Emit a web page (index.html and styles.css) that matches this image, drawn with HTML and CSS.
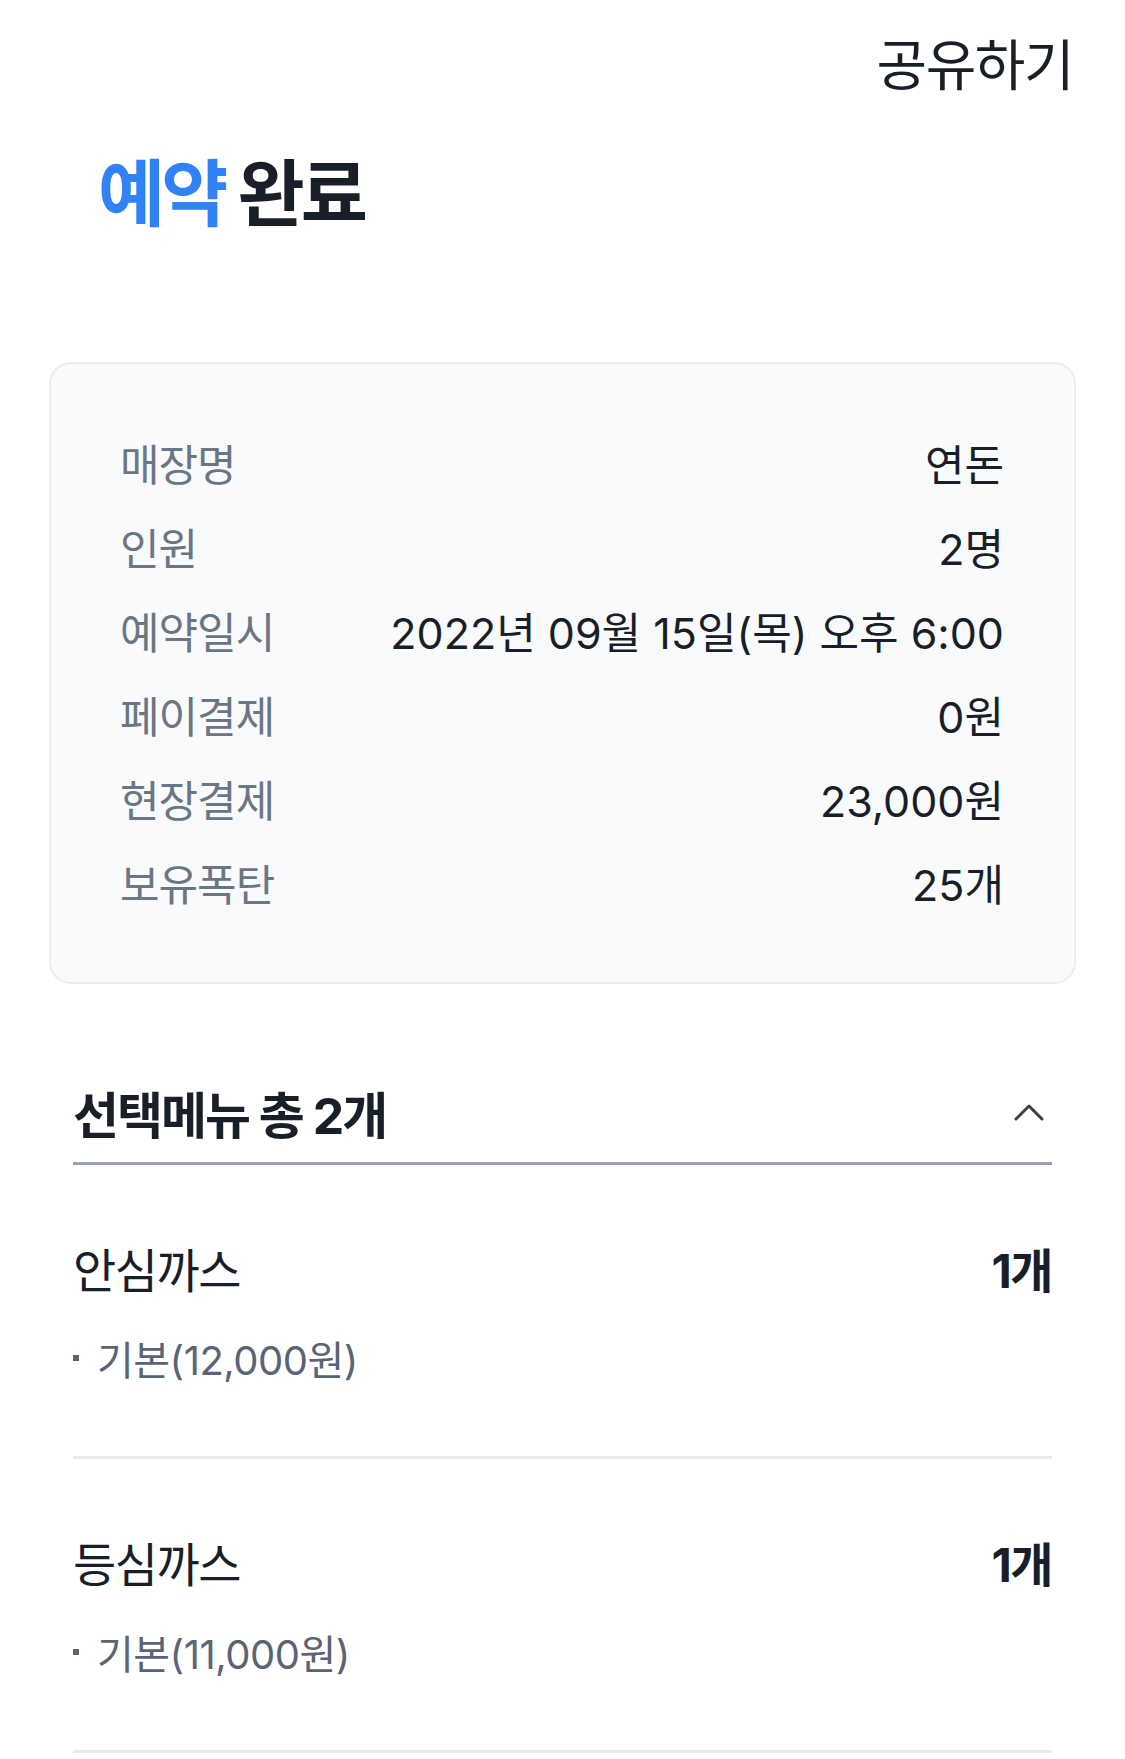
FILE: index.html
```html
<!DOCTYPE html>
<html lang="ko">
<head>
  <meta charset="UTF-8" />
  <title>예약 완료</title>
  <link rel="stylesheet" href="styles.css">
</head>
<body>
  <div class="topbar">
    <button class="share">공유하기</button>
  </div>

  <h1 class="title"><span class="accent">예약</span> 완료</h1>

  <div class="summary">
    <div class="row"><span class="label">매장명</span><span class="value">연돈</span></div>
    <div class="row"><span class="label">인원</span><span class="value">2명</span></div>
    <div class="row"><span class="label">예약일시</span><span class="value">2022년 09월 15일(목) 오후 6:00</span></div>
    <div class="row"><span class="label">페이결제</span><span class="value">0원</span></div>
    <div class="row"><span class="label">현장결제</span><span class="value">23,000원</span></div>
    <div class="row"><span class="label">보유폭탄</span><span class="value">25개</span></div>
  </div>

  <div class="menu">
    <div class="menu-head">
      <h3>선택메뉴 총 2개</h3>
      <svg class="chevron" width="30" height="18" viewBox="0 0 30 18">
        <path d="M2 16 L15 3 L28 16" fill="none" stroke="#3b4047" stroke-width="3" stroke-linecap="round" stroke-linejoin="round"/>
      </svg>
    </div>
    <div id="menuList"></div>
  </div>

  <script>
    const items = [
      { name: "안심까스", qty: 1, option: "기본(12,000원)" },
      { name: "등심까스", qty: 1, option: "기본(11,000원)" },
    ];

    const list = document.getElementById("menuList");
    items.forEach(item => {
      list.innerHTML += `<div class="item">
        <div class="item-top">
          <span class="item-name">${item.name}</span>
          <span class="item-qty">${item.qty}개</span>
        </div>
        <div class="item-option">${item.option}</div>
      </div>`;
    });
  </script>
</body>
</html>
```

FILE: styles.css
```css
body {
  margin: 0;
  font-family: Inter, "Noto Sans CJK KR", sans-serif;
  background-color: #fff;
  color: #191f28;
}

.topbar {
  display: flex;
  justify-content: flex-end;
  align-items: center;
  height: 122px;
  padding: 0 52px;
}

.share {
  border: none;
  background: none;
  padding: 0;
  font-family: inherit;
  font-size: 55px;
  font-weight: 400;
  letter-spacing: -1.5px;
  color: #191f28;
}

.title {
  margin: 0 0 96px;
  padding-left: 98px;
  font-size: 73px;
  line-height: 144px;
  font-weight: 700;
  letter-spacing: -4px;
  color: #191f28;
}

.title .accent {
  color: #3182f6;
}

.summary {
  margin: 0 49px;
  padding: 56px 70px 58px 69px;
  background-color: #f9fafb;
  border: 2px solid #eaecef;
  border-radius: 22px;
}

.row {
  display: flex;
  justify-content: space-between;
  align-items: center;
  height: 84px;
  font-size: 43px;
  letter-spacing: -1px;
}

.row .label {
  color: #6b7684;
}

.row .value {
  color: #191f28;
  letter-spacing: 0;
}

.menu {
  margin: 78px 73px 0;
}

.menu-head {
  display: flex;
  justify-content: space-between;
  align-items: center;
  height: 100px;
  border-bottom: 3px solid #9aa1aa;
}

.menu-head h3 {
  margin: 0;
  font-size: 50px;
  font-weight: 700;
  letter-spacing: -2px;
}

.chevron {
  margin-right: 8px;
}

.item {
  padding: 72px 0 70px;
  border-bottom: 3px solid #e8eaed;
}

.item-top {
  display: flex;
  justify-content: space-between;
  align-items: center;
  height: 60px;
  font-size: 47px;
  letter-spacing: -1.5px;
}

.item-qty {
  font-weight: 700;
}

.item-option {
  display: flex;
  align-items: center;
  margin-top: 33px;
  height: 56px;
  font-size: 40px;
  letter-spacing: -0.5px;
  color: #5b6474;
}

.item-option::before {
  content: "";
  width: 6px;
  height: 6px;
  margin-right: 18px;
  background-color: #5b6474;
}
```
